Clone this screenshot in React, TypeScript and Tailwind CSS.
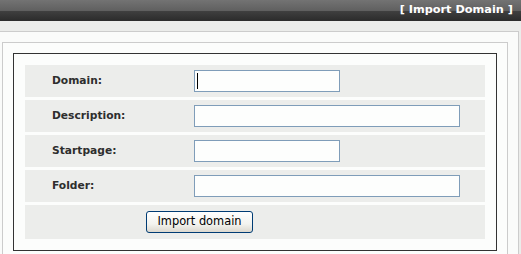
import React from 'react';

const rows = [
  { label: 'Domain:', width: 'w-[146px]', caret: true },
  { label: 'Description:', width: 'w-[266px]', caret: false },
  { label: 'Startpage:', width: 'w-[146px]', caret: false },
  { label: 'Folder:', width: 'w-[266px]', caret: false },
];

export default function App() {
  return (
    <div className="w-[521px] h-[254px] overflow-hidden bg-[#ebecea] font-['DejaVu_Sans',sans-serif]">
      <div className="h-[21px] flex items-center justify-end pr-[8px] pb-[2px] bg-[linear-gradient(to_bottom,#737373_0%,#606060_50%,#404040_52%,#2b2b2b_100%)]">
        <p className="text-[11.3px] font-bold text-white leading-none">[ Import Domain ]</p>
      </div>
      <div className="h-[10px]" />
      <div className="w-[519px] border-t border-r border-[#cccccc] bg-[#fafbfa] pt-[10px]">
        <div className="ml-[2px] w-[506px] border border-[#cccccc] bg-[#fcfdfc] pt-[10px] pl-[10px] pb-[20px]">
          <div className="w-[484px] border border-[#333333] p-[11px] flex flex-col gap-[3px]">
            { rows.map((row) => (
              <div key={ row.label } className="h-[32px] flex items-center bg-[#ecedeb]">
                <p className="w-[169px] pl-[27px] text-[10.7px] font-bold text-[#2e2e2e]">{ row.label }</p>
                <div className={ `relative h-[22px] border border-[#7f9db9] bg-[#fdfefd] ${ row.width }` }>
                  { row.caret && <span className="absolute left-[2px] top-[2px] w-px h-[16px] bg-black" /> }
                </div>
              </div>
            )) }
            <div className="h-[34px] flex items-center bg-[#ecedeb] pl-[121px]">
              <button className="w-[107px] h-[22px] border border-[#003c74] rounded-[3px] bg-[linear-gradient(to_bottom,#ffffff_0%,#f3f3ef_60%,#dcd8ce_100%)] text-[11.4px] text-black leading-none">
                Import domain
              </button>
            </div>
          </div>
        </div>
      </div>
    </div>
  );
}
